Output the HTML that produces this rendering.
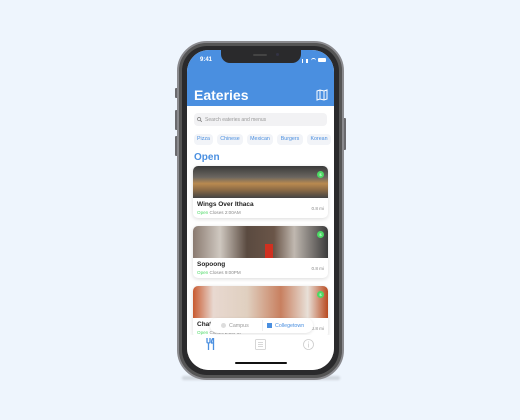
<!DOCTYPE html><html><head><style>
*{margin:0;padding:0;box-sizing:border-box}
body{width:520px;height:420px;background:#eef5fd;position:relative;overflow:hidden;font-family:"Liberation Sans",sans-serif}
.shadow{position:absolute;left:182px;top:376px;width:158px;height:4px;background:#d0d6de;border-radius:2px;filter:blur(1px)}
.phone{position:absolute;left:177px;top:41px;width:167px;height:339px;border-radius:30px;background:#2a2a2c;border:2px solid #8a8a8e;box-shadow:inset 0 0 0 3px #555}
.btn{position:absolute;background:#6a6a6e;width:3px;border-radius:1px}
.screen{position:absolute;left:187px;top:50px;width:147px;height:320px;border-radius:22px;background:#fff;overflow:hidden}
.hdr{position:absolute;left:0;top:0;width:147px;height:56px;background:#4a8fe0}
.notch{position:absolute;left:34px;top:0;width:80px;height:13px;background:#2a2a2c;border-radius:0 0 9px 9px}
.t{position:absolute;color:#fff;font-size:6px;font-weight:bold}
.title{position:absolute;left:7px;top:37px;color:#fff;font-size:14px;font-weight:bold}
.search{position:absolute;left:7px;top:63px;width:133px;height:13px;background:#f2f2f4;border-radius:4px;font-size:5px;color:#999;padding:4px 0 0 11px}
.chip{position:absolute;top:84px;height:11px;background:#f2f4f8;border-radius:4px;font-size:5.3px;color:#4a8fe0;text-align:center;line-height:11px}
.open{position:absolute;left:7px;top:102px;color:#4a8fe0;font-size:10px;font-weight:bold}
.card{position:absolute;left:6px;width:135px;height:52px;background:#fff;border-radius:5px;box-shadow:0 1px 4px rgba(0,0,0,.15);overflow:hidden}
.img{height:32px}
.nm{position:absolute;left:4px;top:35px;font-size:6.5px;font-weight:bold;color:#222}
.st{position:absolute;left:4px;top:43.5px;font-size:4.6px;color:#888}
.st b{color:#4cd964;font-weight:normal}
.mi{position:absolute;right:4px;top:40px;font-size:4.6px;color:#888}
.dol{position:absolute;right:4px;top:5px;width:7px;height:7px;border-radius:50%;background:#4cd964;color:#fff;font-size:4px;text-align:center;line-height:7px}
.tab{position:absolute;left:0;top:285px;width:147px;height:35px;background:#fff}
</style></head><body>
<div class="shadow"></div>
<div class="btn" style="left:175px;top:88px;height:10px"></div>
<div class="btn" style="left:175px;top:110px;height:20px"></div>
<div class="btn" style="left:175px;top:136px;height:20px"></div>
<div class="btn" style="left:343px;top:118px;height:32px"></div>
<div class="phone"></div>
<div class="screen">
<div class="hdr"></div>
<div class="notch"><div style="position:absolute;left:32px;top:4px;width:14px;height:2px;background:#444;border-radius:1px"></div><div style="position:absolute;left:55px;top:3px;width:3px;height:3px;background:#334;border-radius:50%"></div></div>
<div class="t" style="left:13px;top:7px">9:41</div>
<div style="position:absolute;left:115px;top:9px;width:6px;height:4px;border-left:1px solid #fff;border-right:2px solid #fff"></div>
<div style="position:absolute;left:124px;top:8px;width:5px;height:4px;border-radius:3px 3px 0 0;border-top:1.5px solid #fff"></div>
<div style="position:absolute;left:131px;top:8px;width:8px;height:4px;background:#fff;border-radius:1px"></div>
<div class="title">Eateries</div>
<svg style="position:absolute;left:129px;top:39px" width="12" height="12" viewBox="0 0 12 12" fill="none" stroke="#fff" stroke-width="1"><path d="M1 2l3-1 4 1 3-1v9l-3 1-4-1-3 1z M4 1v9 M8 2v9"/></svg>
<div class="search">Search eateries and menus</div>
<svg style="position:absolute;left:10px;top:67px" width="5" height="5" viewBox="0 0 6 6" fill="none" stroke="#888"><circle cx="2.5" cy="2.5" r="2"/><path d="M4 4l2 2"/></svg>
<div class="chip" style="left:7px;width:19px">Pizza</div>
<div class="chip" style="left:30px;width:26px">Chinese</div>
<div class="chip" style="left:60px;width:26px">Mexican</div>
<div class="chip" style="left:90px;width:26px">Burgers</div>
<div class="chip" style="left:120px;width:24px">Korean</div>
<div class="open">Open</div>
<div class="card" style="top:116px"><div class="img" style="background:linear-gradient(180deg,#3a3a3a 0,#6b6660 35%,#b98a50 55%,#8a6a45 75%,#444 100%)"></div><div class="dol">$</div><div class="nm">Wings Over Ithaca</div><div class="st"><b>Open</b> Closes 2:00AM</div><div class="mi">0.8 mi</div></div>
<div class="card" style="top:176px"><div class="img" style="background:linear-gradient(90deg,#8a7a70 0,#cfc8c0 20%,#5a4a40 40%,#6a5548 60%,#c0b8b0 75%,#3a3a3a 100%)"></div><div style="position:absolute;left:72px;top:18px;width:8px;height:14px;background:#d03020"></div><div class="dol">$</div><div class="nm">Sopoong</div><div class="st"><b>Open</b> Closes 9:00PM</div><div class="mi">0.8 mi</div></div>
<div class="card" style="top:236px"><div class="img" style="background:linear-gradient(90deg,#c85a30 0,#e8d8d0 15%,#e0d0c0 40%,#c88060 65%,#e8e0d8 85%,#b84a20 100%)"></div><div class="dol">$</div><div class="nm">Chat</div><div class="st"><b>Open</b> Closes 2:00PM</div><div class="mi">0.8 mi</div></div>
<div style="position:absolute;left:23px;top:268px;width:103px;height:15px;background:#fff;border-radius:8px;box-shadow:0 1px 3px rgba(0,0,0,.12);font-size:5.3px">
<div style="position:absolute;left:11px;top:5px;width:5px;height:5px;border-radius:50%;background:#ddd"></div><span style="position:absolute;left:19px;top:4.5px;color:#999">Campus</span>
<div style="position:absolute;left:52px;top:2px;width:1px;height:11px;background:#eee"></div>
<div style="position:absolute;left:57px;top:5px;width:5px;height:5px;background:#4a8fe0"></div><span style="position:absolute;left:65px;top:4.5px;color:#4a8fe0">Collegetown</span></div>
<div class="tab"></div>
<svg style="position:absolute;left:19px;top:288px" width="10" height="12" viewBox="0 0 10 12" fill="none" stroke="#4a8fe0" stroke-width="1.3"><path d="M1 0v4q0 1 1.5 1q1.5 0 1.5-1V0M2.5 5v7M7.5 0q-2 1-2 5h2V12M7.5 0v12"/></svg>
<svg style="position:absolute;left:68px;top:289px" width="11" height="11" viewBox="0 0 11 11" fill="none" stroke="#ccc" stroke-width=".8"><rect x=".5" y=".5" width="10" height="10" rx="1"/><path d="M3 3.5h5M3 5.5h5M3 7.5h5"/></svg>
<svg style="position:absolute;left:116px;top:289px" width="11" height="11" viewBox="0 0 11 11" fill="none" stroke="#ccc" stroke-width=".8"><circle cx="5.5" cy="5.5" r="5"/><path d="M5.5 4.5v4M5.5 2.5v1"/></svg>
<div style="position:absolute;left:48px;top:312px;width:52px;height:2px;background:#111;border-radius:1px"></div>
</div>
</body></html>
